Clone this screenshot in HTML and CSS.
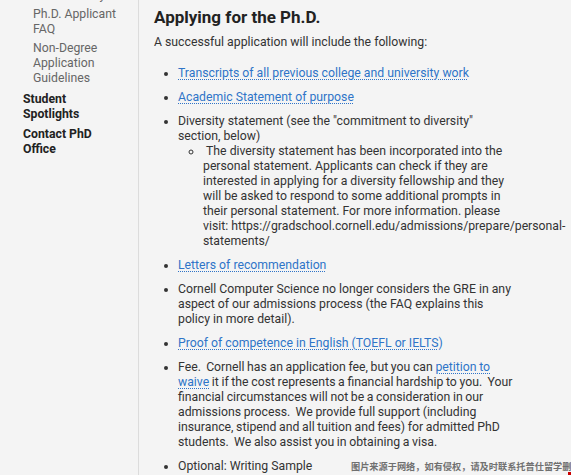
FILE: index.html
```html
<!DOCTYPE html>
<html lang="en">
<head>
<meta charset="utf-8">
<title>Applying for the Ph.D.</title>
<link rel="stylesheet" href="styles.css">
</head>
<body>
<div class="page">
  <nav class="sidebar">
    <ul class="nav">
      <li class="sub">PhD Diversity</li>
      <li class="sub">Ph.D. Applicant FAQ</li>
      <li class="sub">Non-Degree Application Guidelines</li>
      <li class="top">Student Spotlights</li>
      <li class="top">Contact PhD Office</li>
    </ul>
  </nav>
  <main class="main">
    <h2 class="title">Applying for the Ph.D.</h2>
    <p class="intro">A successful application will include the following:</p>
    <ul class="reqs">
      <li><a href="#">Transcripts of all previous college and university work</a></li>
      <li><a href="#">Academic Statement of purpose</a></li>
      <li>Diversity statement (see the "commitment to diversity" section, below)
        <ul class="subreqs">
          <li>&nbsp;The diversity statement has been incorporated into the personal statement. Applicants can check if they are interested in applying for a diversity fellowship and they will be asked to respond to some additional prompts in their personal statement. For more information. please visit:&nbsp;https://gradschool.cornell.edu/admissions/prepare/personal-statements/</li>
        </ul>
      </li>
      <li><a href="#">Letters of recommendation</a></li>
      <li>Cornell Computer Science no longer considers the GRE in any aspect of our admissions process (the FAQ explains this policy in more detail).</li>
      <li><a href="#">Proof of competence in English (TOEFL or IELTS)</a></li>
      <li class="fee">Fee.&nbsp; Cornell has an application fee, but you can <a href="#">petition to waive</a> it if the cost represents a financial hardship to you.&nbsp; Your financial circumstances will not be a consideration in our admissions process.&nbsp; We provide full support (including insurance, stipend and all tuition and fees) for admitted PhD students.&nbsp; We also assist you in obtaining a visa.</li>
      <li>Optional: Writing Sample</li>
    </ul>
  </main>
</div>
<div class="watermark">图片来源于网络，如有侵权，请及时联系托普仕留学删除</div>
<div class="corner"></div>
</body>
</html>
```
FILE: styles.css
```css
html, body {
  margin: 0;
  padding: 0;
  background: #f4f4f4;
  height: 100%;
  overflow: hidden;
}
body {
  font-family: Roboto, "Liberation Sans", Arial, sans-serif;
  color: #333;
  font-size: 12.25px;
  line-height: 15px;
}
.page {
  display: flex;
  align-items: stretch;
  min-height: 100%;
}
.sidebar {
  width: 138px;
  flex: none;
  border-right: 1px solid #dcdcdc;
  min-height: 475px;
}
.nav {
  list-style: none;
  margin: -12px 0 0 0;
  padding: 0;
  font-size: 12.25px;
  line-height: 15px;
}
.nav li.sub {
  color: #666;
  padding-left: 33px;
  padding-right: 10px;
  margin-bottom: 4px;
}
.nav li.top {
  color: #222;
  font-weight: bold;
  padding-left: 23px;
  padding-right: 22px;
  margin-top: 6px;
}
.nav li.top + li.top {
  margin-top: 5px;
}
.main {
  padding-left: 15px;
  width: 362px;
  flex: none;
}
.title {
  margin: 7px 0 0 0;
  font-size: 17px;
  line-height: 20px;
  font-weight: bold;
  color: #222;
}
.intro {
  margin: 8px 0 0 0;
}
.reqs {
  margin: 16px 0 0 0;
  padding-left: 24px;
  list-style: disc;
}
.reqs > li {
  margin-bottom: 9px;
}
.reqs > li.fee {
  word-spacing: -0.4px;
}
.subreqs {
  margin: 0;
  padding-left: 25px;
  list-style: circle;
}
a {
  color: #2f74c8;
  text-decoration: underline dotted 1px;
  text-underline-offset: 2px;
}
.watermark {
  position: absolute;
  left: 351px;
  top: 460px;
  font-family: "Noto Sans CJK SC", sans-serif;
  font-size: 9.2px;
  line-height: 12px;
  font-weight: 700;
  color: #707070;
  white-space: nowrap;
}
.corner {
  position: absolute;
  right: 0;
  bottom: 0;
  width: 3px;
  height: 3px;
  background: #c00;
}
```
